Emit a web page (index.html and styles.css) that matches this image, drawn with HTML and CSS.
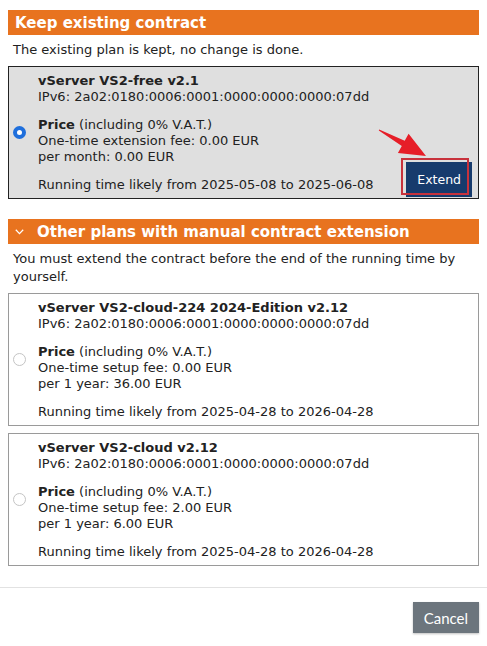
FILE: index.html
```html
<!DOCTYPE html>
<html lang="en">
<head>
<meta charset="utf-8">
<title>Contract extension</title>
<link rel="stylesheet" href="styles.css">
</head>
<body>
<div class="content">
  <section class="group">
    <h2 class="group-title">Keep existing contract</h2>
    <p class="group-desc">The existing plan is kept, no change is done.</p>
    <div class="plan plan-current">
      <span class="radio radio-checked"></span>
      <div class="plan-body">
        <p><b>vServer VS2-free v2.1</b><br>IPv6: 2a02:0180:0006:0001:0000:0000:0000:07dd</p>
        <p><b>Price</b> (including 0% V.A.T.)<br>One-time extension fee: 0.00 EUR<br>per month: 0.00 EUR</p>
        <p>Running time likely from 2025-05-08 to 2025-06-08</p>
      </div>
      <button class="btn-extend">Extend</button>
      <span class="mark-box"></span>
      <svg class="mark-arrow" width="70" height="45" viewBox="0 0 70 45">
        <polygon points="10.2,7.6 35.7,18.8 39.6,11.8 57,34 28.9,31.1 32.8,24.1 9.8,8.4" fill="#e61e28"/>
      </svg>
    </div>
  </section>

  <section class="group group-other">
    <h2 class="group-title">
      <svg class="chevron" width="9" height="6" viewBox="0 0 9 6"><polyline points="0.8,0.8 4.5,4.6 8.2,0.8" fill="none" stroke="#fff" stroke-width="1.3"/></svg>
      Other plans with manual contract extension
    </h2>
    <p class="group-desc">You must extend the contract before the end of the running time by yourself.</p>
    <div class="plan">
      <span class="radio"></span>
      <div class="plan-body">
        <p><b>vServer VS2-cloud-224 2024-Edition v2.12</b><br>IPv6: 2a02:0180:0006:0001:0000:0000:0000:07dd</p>
        <p><b>Price</b> (including 0% V.A.T.)<br>One-time setup fee: 0.00 EUR<br>per 1 year: 36.00 EUR</p>
        <p>Running time likely from 2025-04-28 to 2026-04-28</p>
      </div>
    </div>
    <div class="plan">
      <span class="radio"></span>
      <div class="plan-body">
        <p><b>vServer VS2-cloud v2.12</b><br>IPv6: 2a02:0180:0006:0001:0000:0000:0000:07dd</p>
        <p><b>Price</b> (including 0% V.A.T.)<br>One-time setup fee: 2.00 EUR<br>per 1 year: 6.00 EUR</p>
        <p>Running time likely from 2025-04-28 to 2026-04-28</p>
      </div>
    </div>
  </section>
</div>
<footer class="actions">
  <button class="btn-cancel">Cancel</button>
</footer>
</body>
</html>
```

FILE: styles.css
```css
body {
  margin: 0;
  font-family: "DejaVu Sans", Verdana, sans-serif;
  font-size: 13px;
  color: #222;
  background: #fff;
}

.content {
  padding: 10px 8px 0;
}

.group-other {
  margin-top: 20px;
}

.group-title {
  margin: 0;
  height: 25px;
  padding-left: 7px;
  display: flex;
  align-items: center;
  background: #e8731f;
  color: #fff;
  font-size: 15px;
  font-weight: bold;
}

.chevron {
  margin-right: 13px;
  margin-top: 1px;
}

.group-desc {
  margin: 6px 0 7px 5px;
  line-height: 18px;
}

.plan {
  position: relative;
  display: flex;
  align-items: center;
  padding: 0 6px 0 4px;
  border: 1px solid #9a9a9a;
  background: #fff;
}

.plan + .plan {
  margin-top: 7px;
}

.plan-current {
  border-color: #222;
  background: #dfdfdf;
}

.radio {
  flex: none;
  box-sizing: border-box;
  width: 13px;
  height: 13px;
  margin-right: 12px;
  border-radius: 50%;
  border: 1px solid #c4c4c4;
  background: #fff;
}

.radio-checked {
  border: 4px solid #1f6fdc;
}

.plan-body {
  flex: 1;
  padding: 6px 0 5px;
  line-height: 16px;
}

.plan-body p {
  margin: 0;
}

.plan-body p + p {
  margin-top: 12px;
}

.btn-extend {
  align-self: flex-end;
  margin-bottom: 1px;
  height: 35px;
  padding: 0 11px;
  border: none;
  background: #173b6d;
  color: #fff;
  font-family: "DejaVu Sans", Verdana, sans-serif;
  font-size: 12.5px;
}

.mark-box {
  position: absolute;
  left: 392px;
  top: 91px;
  width: 68px;
  height: 37px;
  box-sizing: border-box;
  border: 2px solid #c8323c;
}

.mark-arrow {
  position: absolute;
  left: 360px;
  top: 55px;
}

.actions {
  margin-top: 21px;
  border-top: 1px solid #e2e2e2;
  padding: 14px 8px;
  display: flex;
  justify-content: flex-end;
}

.btn-cancel {
  height: 31px;
  padding: 0 11px;
  border: none;
  background: #6c757d;
  color: #fff;
  font-family: Lato, "Liberation Sans", sans-serif;
  font-size: 15px;
  box-shadow: 0 1px 2px rgba(0,0,0,0.25);
}
```
